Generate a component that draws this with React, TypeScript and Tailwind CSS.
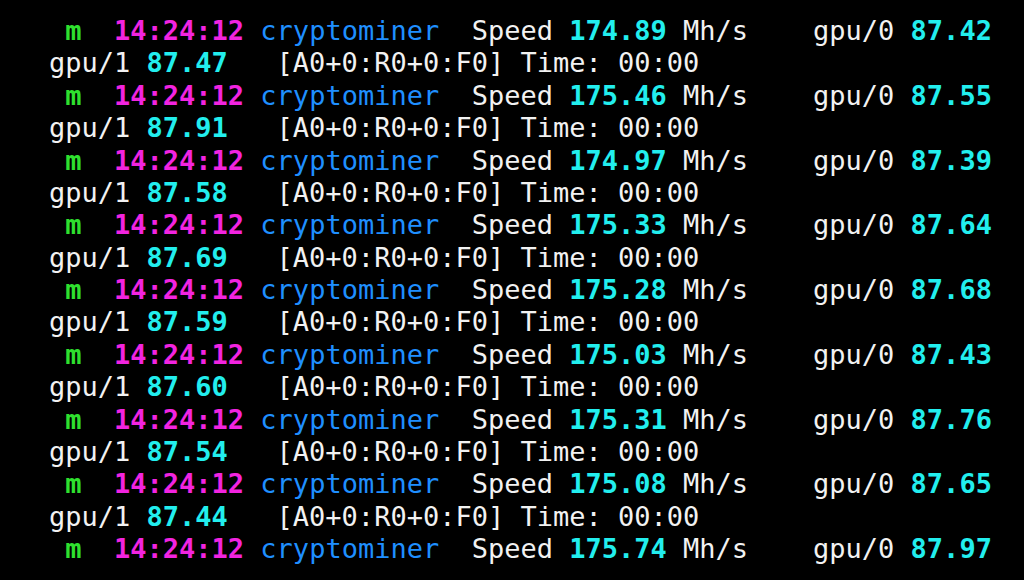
const rows = [
    { speed: "174.89", g0: "87.42", g1: "87.47" },
    { speed: "175.46", g0: "87.55", g1: "87.91" },
    { speed: "174.97", g0: "87.39", g1: "87.58" },
    { speed: "175.33", g0: "87.64", g1: "87.69" },
    { speed: "175.28", g0: "87.68", g1: "87.59" },
    { speed: "175.03", g0: "87.43", g1: "87.60" },
    { speed: "175.31", g0: "87.76", g1: "87.54" },
    { speed: "175.08", g0: "87.65", g1: "87.44" },
    { speed: "175.74", g0: "87.97", g1: null },
];

function App() {
    return (
        <main className="bg-black w-[1024px] h-[580px] overflow-hidden pt-[15px] pl-[49px] text-[27px] leading-[32.375px] text-[#f2f2f2] whitespace-pre font-['DejaVu_Sans_Mono',monospace]">
            {rows.map((r, i) => (
                <div key={i}>
                    <div>
                        {" "}<span className="font-bold text-[#2fe02f]">m</span>
                        {"  "}<span className="font-bold text-[#f224e0]">14:24:12</span>
                        {" "}<span className="text-[#1f8fff]">cryptominer</span>
                        {"  Speed "}<span className="font-bold text-[#22eeee]">{r.speed}</span>
                        {" Mh/s    gpu/0 "}<span className="font-bold text-[#22eeee]">{r.g0}</span>
                    </div>
                    {r.g1 && (
                        <div>
                            {"gpu/1 "}<span className="font-bold text-[#22eeee]">{r.g1}</span>
                            {"   [A0+0:R0+0:F0] Time: 00:00"}
                        </div>
                    )}
                </div>
            ))}
        </main>
    );
}

export default App;
